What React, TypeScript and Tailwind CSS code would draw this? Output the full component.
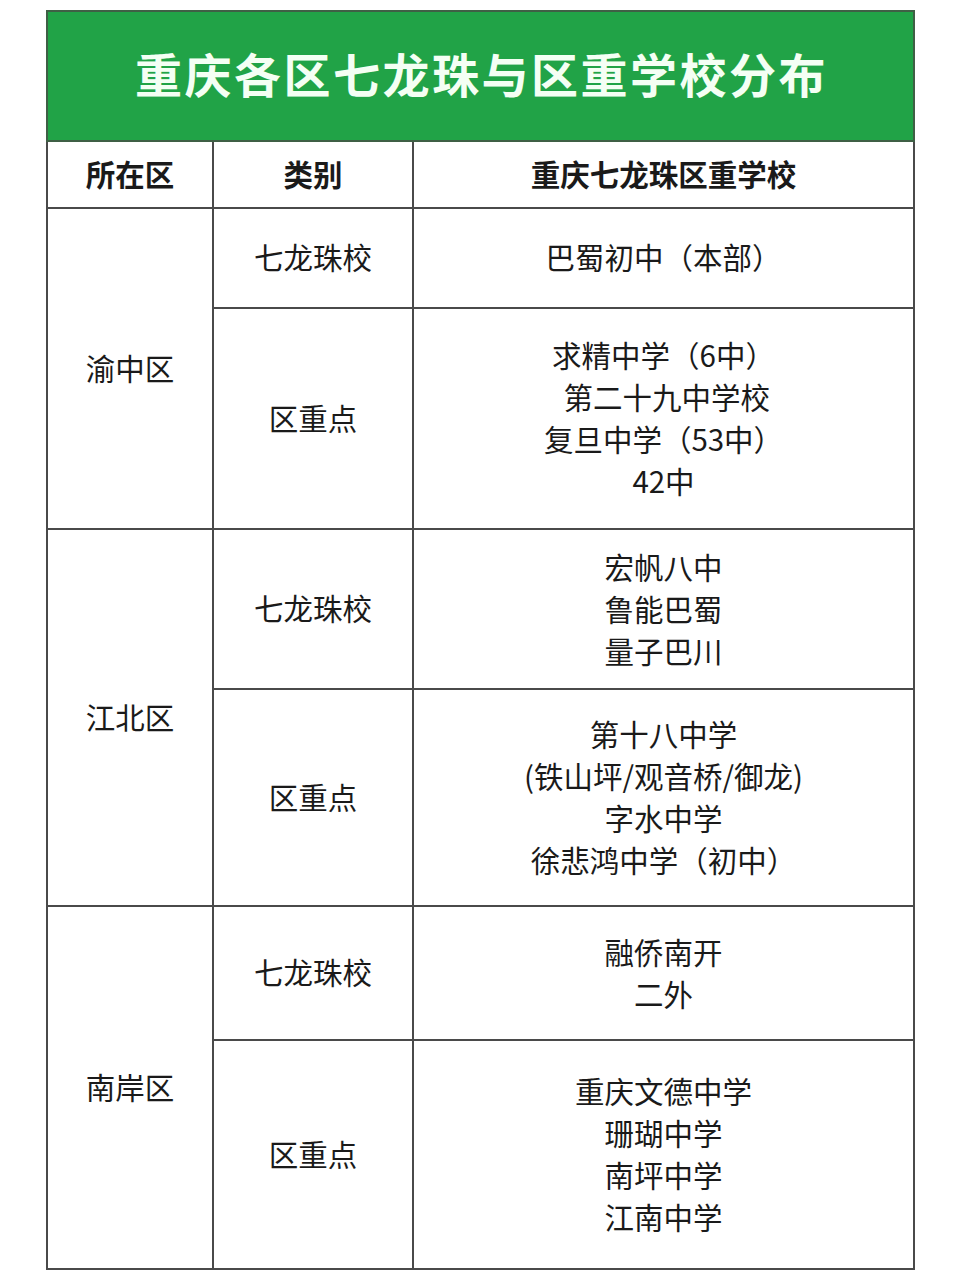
import React from "react";

const font = { fontFamily: '"Noto Sans CJK SC", "Noto Sans", sans-serif' };

function Lines({ items }: { items: string[] }) {
  return (
    <div className="flex flex-col items-center leading-[42px]">
      {items.map((t, i) => (
        <div key={i} className="whitespace-pre">{t}</div>
      ))}
    </div>
  );
}

const td = "border-2 border-[#4a4a4a] text-center align-middle p-0 pb-[3px]";

export default function App() {
  return (
    <div className="w-[960px] h-[1280px] bg-white pt-[10px] pl-[46px]" style={font}>
      <table className="table-fixed border-collapse w-[867px] text-[29.5px] text-[#1a1a1a]">
        <colgroup>
          <col className="w-[166px]" />
          <col className="w-[200px]" />
          <col className="w-[501px]" />
        </colgroup>
        <tbody>
          <tr className="h-[130px]">
            <td colSpan={3} className="border-2 border-[#3f5f45] bg-[#21a347] text-center align-middle p-0 pb-[6px]">
              <span className="text-[47px] font-bold text-[#f4fff4] tracking-[2.5px] pl-[2px]">重庆各区七龙珠与区重学校分布</span>
            </td>
          </tr>
          <tr className="h-[67px] font-bold">
            <td className={td}>所在区</td>
            <td className={td}>类别</td>
            <td className={td}>重庆七龙珠区重学校</td>
          </tr>
          <tr className="h-[100px]">
            <td className={td} rowSpan={2}>渝中区</td>
            <td className={td}>七龙珠校</td>
            <td className={td}>巴蜀初中（本部）</td>
          </tr>
          <tr className="h-[221px]">
            <td className={td}>区重点</td>
            <td className={td}>
              <Lines items={["求精中学（6中）", " 第二十九中学校", "复旦中学（53中）", "42中"]} />
            </td>
          </tr>
          <tr className="h-[160px]">
            <td className={td} rowSpan={2}>江北区</td>
            <td className={td}>七龙珠校</td>
            <td className={td}>
              <Lines items={["宏帆八中", "鲁能巴蜀", "量子巴川"]} />
            </td>
          </tr>
          <tr className="h-[217px]">
            <td className={td}>区重点</td>
            <td className={td}>
              <Lines items={["第十八中学", "(铁山坪/观音桥/御龙)", "字水中学", "徐悲鸿中学（初中）"]} />
            </td>
          </tr>
          <tr className="h-[134px]">
            <td className={td} rowSpan={2}>南岸区</td>
            <td className={td}>七龙珠校</td>
            <td className={td}>
              <Lines items={["融侨南开", "二外"]} />
            </td>
          </tr>
          <tr className="h-[229px]">
            <td className={td}>区重点</td>
            <td className={td}>
              <Lines items={["重庆文德中学", "珊瑚中学", "南坪中学", "江南中学"]} />
            </td>
          </tr>
        </tbody>
      </table>
    </div>
  );
}
